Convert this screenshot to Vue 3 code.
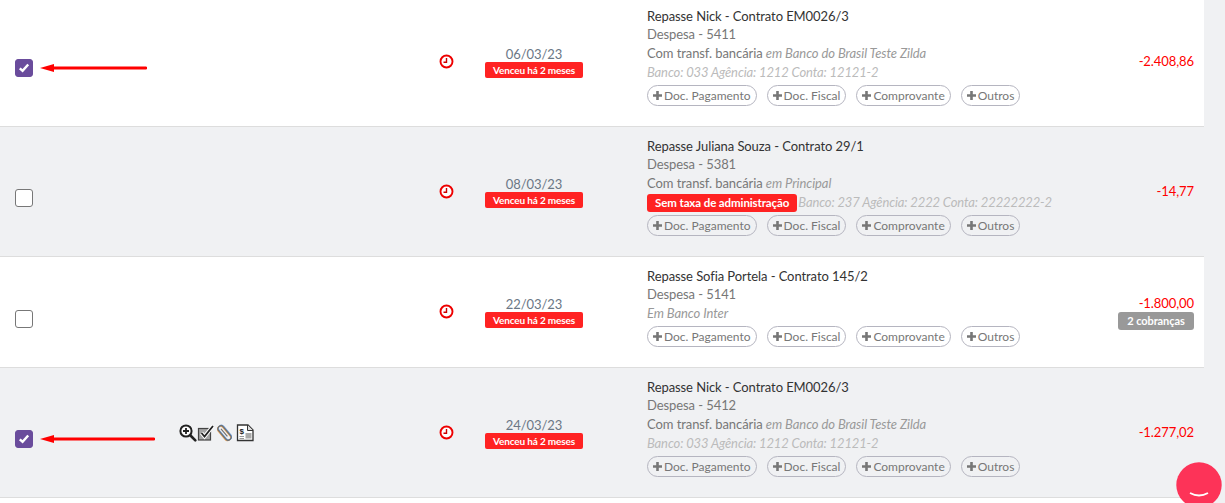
<script setup>
const rows = [
  { h: 130, bg: false, checked: true, arrow: 107, date: '06/03/23', title: 'Repasse Nick - Contrato EM0026/3', sub: 'Despesa - 5411', pay: 'Com transf. bancária ', em: 'em Banco do Brasil Teste Zilda', bank: 'Banco: 033 Agência: 1212 Conta: 12121-2', value: '-2.408,86' },
  { h: 130, bg: true, checked: false, date: '08/03/23', title: 'Repasse Juliana Souza - Contrato 29/1', sub: 'Despesa - 5381', pay: 'Com transf. bancária ', em: 'em Principal', bank: 'Banco: 237 Agência: 2222 Conta: 22222222-2', noFee: true, value: '-14,77' },
  { h: 111, bg: false, checked: false, date: '22/03/23', title: 'Repasse Sofia Portela - Contrato 145/2', sub: 'Despesa - 5141', em: 'Em Banco Inter', value: '-1.800,00', charges: '2 cobranças' },
  { h: 130, bg: true, checked: true, arrow: 115, tools: true, date: '24/03/23', title: 'Repasse Nick - Contrato EM0026/3', sub: 'Despesa - 5412', pay: 'Com transf. bancária ', em: 'em Banco do Brasil Teste Zilda', bank: 'Banco: 033 Agência: 1212 Conta: 12121-2', value: '-1.277,02' }
]
const docs = ['Doc. Pagamento', 'Doc. Fiscal', 'Comprovante', 'Outros']
</script>

<template>
  <div class="page">
    <div class="list">
      <div v-for="row in rows" :key="row.sub" class="row" :class="{ shaded: row.bg }" :style="{ height: row.h + 'px' }">
        <div class="check-col">
          <span class="check" :class="{ on: row.checked }">
            <svg v-if="row.checked" width="12" height="12" viewBox="0 0 12 12"><path d="M1.800 6.300 4.600 8.900 10.200 2.500" fill="none" stroke="#fff" stroke-width="2.400"/></svg>
          </span>
          <svg v-if="row.arrow" class="arrow" :width="row.arrow" height="10" :viewBox="`0 0 ${row.arrow} 10`"><path :d="`M0 5 14 1V3.600H${row.arrow - 1}a1.400 1.400 0 0 1 0 2.800H14V9Z`" fill="#f00"/></svg>
        </div>
        <div class="tools-col">
          <div v-if="row.tools" class="tools">
            <svg width="18" height="18" viewBox="0 0 18 18"><circle cx="7" cy="7" r="5.600" fill="#fff" stroke="#222" stroke-width="2"/><path d="M4 7h6M7 4v6" stroke="#222" stroke-width="1.800"/><path d="M11.500 11.500l4.800 4.800" stroke="#222" stroke-width="2.600" stroke-linecap="round"/></svg>
            <svg width="18" height="18" viewBox="0 0 18 18"><rect x="1.500" y="4.500" width="12" height="11.500" fill="#a5a5a5" stroke="#444" stroke-width="1.200"/><path d="M4.500 9l3 3.500L16 2" fill="none" stroke="#fff" stroke-width="3.800"/><path d="M4.500 9l3 3.500L16 2" fill="none" stroke="#222" stroke-width="1.800"/></svg>
            <svg class="clip" width="15" height="18" viewBox="0 0 15 18">
              <g fill="none" transform="rotate(-40 7.500 9)">
                <rect x="3.900" y="0.500" width="6" height="17" rx="3" stroke="#e5a35a" stroke-width="1.200"/>
                <rect x="5.100" y="0.500" width="6" height="17" rx="3" stroke="#6c9bd6" stroke-width="1.200"/>
                <rect x="4.500" y="0.500" width="6" height="17" rx="3" stroke="#6e6e6e" stroke-width="1.100"/>
                <path d="M7.500 3.500v10" stroke="#6e6e6e" stroke-width="1.100"/>
              </g>
            </svg>
            <svg class="doc-icon" width="18" height="18" viewBox="0 0 18 18"><path d="M1.500 1h10.500l5 5v10.500h-15.500z" fill="#fff" stroke="#333" stroke-width="1.300"/><path d="M11.500 1v5.500h5.500" fill="#ddd" stroke="#333"/><text x="3.500" y="10" class="dollar">$</text><path d="M9.500 9h6v5.500h-6z" fill="#aaa"/><path d="M3.500 12.500h4.500M3.500 14.500h4.500" stroke="#999"/></svg>
          </div>
        </div>
        <div class="clock-col">
          <svg width="15" height="15" viewBox="0 0 15 15"><circle cx="7.500" cy="7.500" r="6" fill="#fff" stroke="#e00" stroke-width="1.900"/><path d="M7.500 4v4.200H4.500" fill="none" stroke="#c00" stroke-width="1.400"/></svg>
        </div>
        <div class="date-col">
          <div class="date">{{ row.date }}</div>
          <div class="late">Venceu há 2 meses</div>
        </div>
        <div class="info-col">
          <div class="title">{{ row.title }}</div>
          <div class="line">{{ row.sub }}</div>
          <div class="line">{{ row.pay }}<i class="light">{{ row.em }}</i></div>
          <div v-if="row.bank" class="line bank"><span v-if="row.noFee" class="nofee">Sem taxa de administração</span><i>{{ row.bank }}</i></div>
          <div class="docs">
            <span v-for="d in docs" :key="d" class="doc">
              <svg width="11" height="11" viewBox="0 0 11 11"><path d="M5.500 1v9M1 5.500h9" stroke="#777" stroke-width="2.600"/></svg>{{ d }}
            </span>
          </div>
        </div>
        <div class="value-col">
          <div class="value">{{ row.value }}</div>
          <div v-if="row.charges" class="charges">{{ row.charges }}</div>
        </div>
      </div>
      <div class="next-row"></div>
    </div>
    <div class="chat">
      <svg width="50" height="50" viewBox="0 0 50 50"><circle cx="23" cy="23" r="22.700" fill="#fd3358"/><path d="M30 40 42 48 24 46Z" fill="#fd3358"/><path d="M14 31q9 5 18 0" fill="none" stroke="#fff" stroke-width="1.800"/></svg>
    </div>
  </div>
</template>

<style>
html, body { overflow: hidden; background: #f0f1f3; }
</style>

<style scoped>
.page {
  position: relative;
  width: 1225px;
  height: 503px;
  overflow: hidden;
  background: #f0f1f3;
}
.list {
  width: 1204px;
  margin-top: -3px;
  font-family: Lato, "Liberation Sans", sans-serif;
  font-size: 13px;
  letter-spacing: -0.08px;
  color: #777;
}
.row {
  display: flex;
  align-items: center;
  box-sizing: border-box;
  border-bottom: 1px solid #ddd;
  background: #fff;
}
.row.shaded { background: #f0f1f3; }
.next-row { height: 10px; background: #fff; }
.check-col { width: 165px; padding-left: 15px; box-sizing: border-box; display: flex; align-items: center; gap: 7px; margin-top: 13px; }
.check {
  width: 18px;
  height: 18px;
  box-sizing: border-box;
  border: 1px solid #777;
  border-radius: 3px;
  background: #fff;
  display: flex;
  align-items: center;
  justify-content: center;
}
.check.on { background: #6a4c9c; border-color: #6a4c9c; }
.arrow { display: block; }
.tools-col { width: 274px; padding-left: 14px; box-sizing: border-box; }
.tools { display: flex; }
.clip { margin-left: 2px; }
.doc-icon { margin-left: 4px; }
.dollar { font-family: "Liberation Sans", sans-serif; font-size: 8px; font-weight: 700; fill: #222; }
.clock-col { width: 46px; display: flex; margin-top: -1px; }
.date-col { width: 98px; text-align: center; }
.date { line-height: 16px; color: #6b7785; }
.late {
  background: #f22;
  color: #fff;
  font-size: 10px;
  font-weight: 700;
  line-height: 16px;
  border-radius: 2px;
  letter-spacing: -0.15px;
}
.info-col { width: 519px; padding-left: 64px; box-sizing: border-box; margin-top: -10px; }
.title { color: #333; line-height: 18px; }
.line { line-height: 19px; }
.light { color: #999; }
.bank { color: #bbb; white-space: nowrap; letter-spacing: -0.13px; }
.nofee {
  display: inline-block;
  background: #f22;
  color: #fff;
  font-weight: 700;
  font-size: 11.500px;
  letter-spacing: -0.1px;
  line-height: 18px;
  border-radius: 3px;
  padding: 0 8px;
  margin-right: 1px;
}
.docs { display: flex; gap: 10px; margin-top: 3px; }
.doc {
  display: flex;
  align-items: center;
  gap: 1px;
  border: 1px solid #b5b5c0;
  border-radius: 11px;
  height: 21px;
  box-sizing: border-box;
  padding: 0 5px 0 4px;
  white-space: nowrap;
  font-size: 12px;
  letter-spacing: 0;
}
.value-col { flex: 1; padding-right: 10px; text-align: right; }
.value { color: #f00; line-height: 17px; }
.charges {
  background: #999;
  color: #fff;
  font-size: 11px;
  font-weight: 700;
  line-height: 18px;
  border-radius: 3px;
  width: 76px;
  text-align: center;
  margin-left: auto;
}
.chat {
  position: absolute;
  left: 1176px;
  top: 462px;
  width: 50px;
  height: 50px;
}
</style>
